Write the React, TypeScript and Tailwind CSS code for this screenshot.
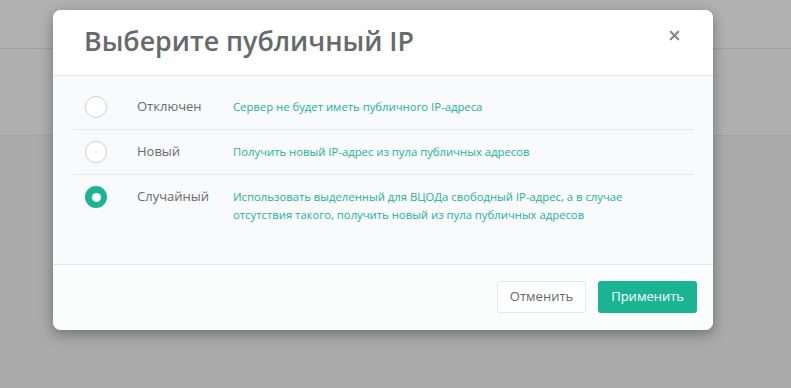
import { X } from "lucide-react";

const OPTIONS = [
  {
    id: "off",
    label: "Отключен",
    desc: "Сервер не будет иметь публичного IP-адреса",
  },
  {
    id: "new",
    label: "Новый",
    desc: "Получить новый IP-адрес из пула публичных адресов",
  },
  {
    id: "random",
    label: "Случайный",
    desc: "Использовать выделенный для ВЦОДа свободный IP-адрес, а в случае отсутствия такого, получить новый из пула публичных адресов",
  },
];

const Radio = ({ checked }: { checked: boolean }) =>
  checked ? (
    <div className="w-[22px] h-[22px] rounded-full bg-[#1ab394] flex items-center justify-center flex-shrink-0">
      <div className="w-[9px] h-[9px] rounded-full bg-white" />
    </div>
  ) : (
    <div className="w-[22px] h-[22px] rounded-full border border-[#d0d0d0] bg-white flex-shrink-0" />
  );

export default function App() {
  const selected = "random";
  return (
    <div
      className="relative w-[791px] h-[388px] overflow-hidden bg-[#aaaaaa]"
      style={{ fontFamily: '"Open Sans", "Noto Sans", sans-serif' }}
    >
      {/* dimmed page underneath */}
      <div className="h-[49px] bg-[#b1b1b1] border-b border-[#a2a2a2]" />
      <div className="h-[87px] bg-[#afafaf] border-b border-[#a4a4a4]" />

      {/* modal */}
      <div className="absolute left-[53px] top-[10px] w-[660px] h-[320px] bg-white rounded-lg shadow-[0_4px_14px_rgba(0,0,0,0.35)] flex flex-col overflow-hidden">
        <div className="h-[66px] flex items-center justify-between pl-[31px] pr-[31px] border-b border-[#e5e6e7] bg-white">
          <h2 className="text-[26.8px] font-semibold text-[#676a6c] leading-none -mt-[3px]">
            Выберите публичный IP
          </h2>
          <X size={15} strokeWidth={3.4} className="text-[#888] -mt-[15px]" />
        </div>

        <div className="h-[189px] bg-[#f9fafc] border-b border-[#e5e6e7] px-5 pt-[9px]">
          {OPTIONS.map((o, i) => (
            <div
              key={o.id}
              className={`flex items-start pl-3 ${i < OPTIONS.length - 1 ? "h-[45px] pt-[11px] border-b border-[#e3e4e6]" : "pt-[11px]"}`}
            >
              <Radio checked={o.id === selected} />
              <span className="w-[96px] ml-[30px] text-[13px] text-[#676a6c] leading-[20px]">
                {o.label}
              </span>
              <span className="flex-1 text-[11.3px] text-[#1ab394] leading-[18px] pt-[2px] pr-10">
                {o.desc}
              </span>
            </div>
          ))}
        </div>

        <div className="flex-1 bg-[#fbfcfc] flex items-start justify-end gap-3 pt-[16px] pr-4">
          <button className="h-[32px] px-[12px] rounded-[3px] border border-[#e5e6e7] bg-white text-[13px] text-[#676a6c]">
            Отменить
          </button>
          <button className="h-[32px] px-[13px] rounded-[3px] bg-[#1ab394] text-[13px] text-white font-medium">
            Применить
          </button>
        </div>
      </div>
    </div>
  );
}
